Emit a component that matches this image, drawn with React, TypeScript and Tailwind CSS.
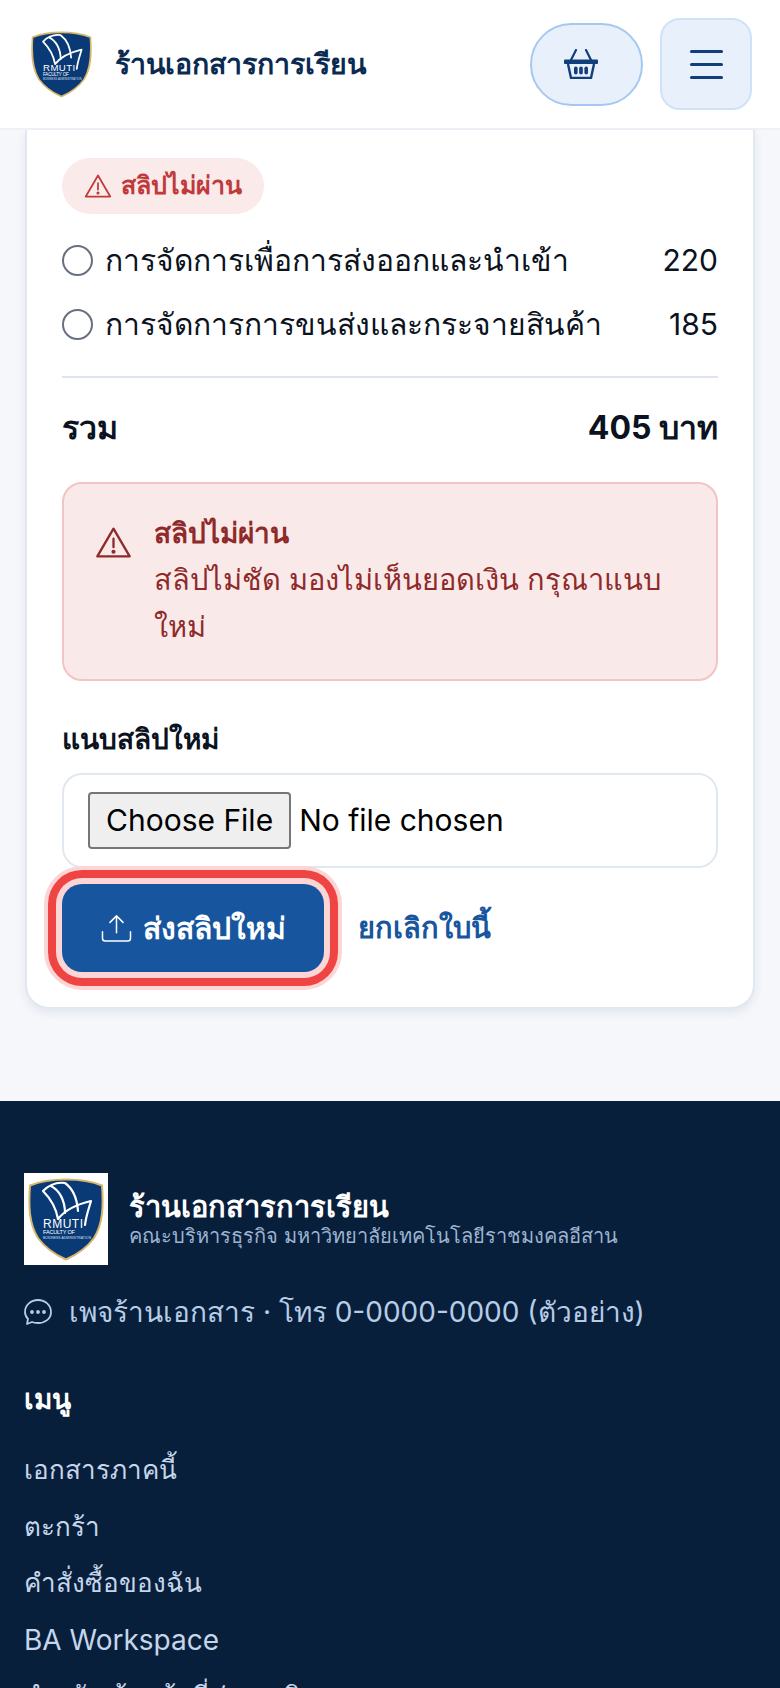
const FONT = "font-['Inter','Noto_Sans','DejaVu_Sans',sans-serif]";

function Shield() {
  return (
    <svg viewBox="0 0 76 83" className="w-full h-full">
      <path d="M38 1.5 C50 1.5 63 3 74 7.5 C75.5 28 75 46 66 60 C58 71 48 77 38 81.5 C28 77 18 71 10 60 C1 46 0.5 28 2 7.5 C13 3 26 1.5 38 1.5 Z" fill="#0a3a75" stroke="#d8b76c" strokeWidth="2" />
      <path d="M15 13 C22 6 30 4 37 5 C44 10 49 20 50 33 M23 8 C31 12 37 22 37 35 M15 13 C22 20 28 30 30 41 C37 32 50 26 63 23 C61 30 58 38 57 47" fill="none" stroke="#ffffff" strokeWidth="2.2" strokeLinecap="round" strokeLinejoin="round" />
      <text x="15" y="50" fill="#ffffff" fontSize="12" textLength="40" fontFamily="Liberation Sans, sans-serif">RMUTI</text>
      <text x="15" y="56" fill="#ffffff" fontSize="5.6" textLength="32" fontFamily="Liberation Sans, sans-serif">FACULTY OF</text>
      <text x="15" y="60.5" fill="#dfe8f5" fontSize="3.2" textLength="48" fontFamily="Liberation Sans, sans-serif">BUSINESS ADMINISTRATION</text>
    </svg>
  );
}

function Warning({ className }: { className: string }) {
  return (
    <svg viewBox="0 0 24 24" fill="none" stroke="currentColor" strokeWidth="1.5" strokeLinejoin="round" strokeLinecap="round" className={className}>
      <path d="M12 3 L22.5 21 H1.5 Z" />
      <path d="M12 9.5 V15" />
      <circle cx="12" cy="18" r="0.6" fill="currentColor" />
    </svg>
  );
}

function Basket() {
  return (
    <svg viewBox="0 0 34 30" className="w-[34px] h-[30px] text-[#123f7c]">
      <path d="M6 13 L12 1 M28 13 L22 1" stroke="currentColor" strokeWidth="2.2" strokeLinecap="round" />
      <rect x="0" y="10.5" width="34" height="4.5" rx="1" fill="currentColor" />
      <path d="M4 15 L7 29 H27 L30 15" fill="none" stroke="currentColor" strokeWidth="2.4" strokeLinejoin="round" />
      <rect x="10" y="17.5" width="3.6" height="8" rx="1.8" fill="currentColor" />
      <rect x="15.2" y="17.5" width="3.6" height="8" rx="1.8" fill="currentColor" />
      <rect x="20.4" y="17.5" width="3.6" height="8" rx="1.8" fill="currentColor" />
    </svg>
  );
}

const items = [
  { name: 'การจัดการเพื่อการส่งออกและนำเข้า', price: '220' },
  { name: 'การจัดการการขนส่งและกระจายสินค้า', price: '185' },
];

export default function App() {
  return (
    <div className={`h-[1688px] overflow-hidden bg-[#f5f7fb] ${FONT}`}>
      <header className="flex items-center justify-between h-[130px] pl-[31px] pr-[28px] bg-white border-b-2 border-[#eef2f7]">
        <div className="flex items-center gap-[23px]">
          <div className="w-[61px] h-[69px]">
            <Shield />
          </div>
          <span className="text-[28.5px] font-semibold text-[#0b2a52]">ร้านเอกสารการเรียน</span>
        </div>
        <div className="flex items-center gap-[17px]">
          <button className="flex items-center justify-center w-[113px] h-[83px] pr-[12px] rounded-full bg-[#e8f0fb] border-2 border-[#a6c8f0]">
            <Basket />
          </button>
          <button className="flex flex-col items-center justify-center gap-[10px] w-[92px] h-[92px] rounded-[20px] bg-[#e8f0fb] border-2 border-[#d0e2f8]">
            <span className="block w-[33px] h-[3px] rounded-full bg-[#123f7c]" />
            <span className="block w-[33px] h-[3px] rounded-full bg-[#123f7c]" />
            <span className="block w-[33px] h-[3px] rounded-full bg-[#123f7c]" />
          </button>
        </div>
      </header>

      <main className="px-[25px]">
        <div className="px-[35px] pt-[28px] pb-[35px] bg-white border-2 border-t-0 border-[#e2e8f0] rounded-b-[24px] shadow-[0_4px_10px_rgba(15,40,80,0.08)]">
          <div className="inline-flex items-center gap-[9px] h-[56px] px-[22px] rounded-full bg-[#faeaea] text-[#c0393b]">
            <Warning className="w-[28px] h-[28px]" />
            <span className="text-[25px] font-semibold">สลิปไม่ผ่าน</span>
          </div>

          <div className="mt-[14px] flex flex-col">
            {items.map((item) => (
              <div key={item.name} className="flex items-center justify-between h-[64px] text-[30px] text-[#0b1220]">
                <div className="flex items-center gap-[12px]">
                  <span className="w-[31px] h-[31px] rounded-full bg-white border-2 border-[#67707f]" />
                  <span>{item.name}</span>
                </div>
                <span>{item.price}</span>
              </div>
            ))}
          </div>

          <div className="mt-[20px] border-t-2 border-[#dfe5ef]" />

          <div className="flex items-center justify-between mt-[26px] text-[32px] font-bold text-[#0b1220]">
            <span>รวม</span>
            <span>405 บาท</span>
          </div>

          <div className="flex gap-[22px] mt-[30px] h-[199px] pt-[26px] pl-[31px] pr-[30px] rounded-[20px] bg-[#fae9e9] border-2 border-[#f2c4c4] text-[#8f2a2a]">
            <Warning className="w-[37px] h-[37px] mt-[14px] shrink-0" />
            <div>
              <div className="text-[28px] font-bold leading-[46px]">สลิปไม่ผ่าน</div>
              <div className="text-[29px] leading-[47px]">สลิปไม่ชัด มองไม่เห็นยอดเงิน กรุณาแนบใหม่</div>
            </div>
          </div>

          <label className="block mt-[37px] text-[28px] font-semibold text-[#0b1220]">แนบสลิปใหม่</label>

          <div className="flex items-center h-[95px] mt-[13px] px-[24px] rounded-[20px] bg-white border-2 border-[#e2e8f0]">
            <input
              type="file"
              className="text-[30px] text-black w-full file:mr-[8px] file:h-[57px] file:px-[16px] file:bg-[#efefef] file:border-2 file:border-[#767676] file:border-solid file:rounded-[4px] file:text-black"
            />
          </div>

          <div className="flex items-center gap-[34px] mt-[16px]">
            <button className="flex items-center justify-center gap-[11px] w-[262px] h-[88px] rounded-[20px] bg-[#17569e] text-white shadow-[0_0_0_6px_#fcd5d5,0_0_0_14px_#ef4444,0_0_0_18px_#fcd5d5]">
              <svg viewBox="0 0 32 30" fill="none" stroke="currentColor" strokeWidth="1.6" strokeLinecap="round" strokeLinejoin="round" className="w-[31px] h-[28px]">
                <path d="M16 20 V2 M9 9 L16 2 L23 9" />
                <path d="M1 19 V26 Q1 29 4 29 H28 Q31 29 31 26 V19" />
              </svg>
              <span className="text-[30px] font-semibold">ส่งสลิปใหม่</span>
            </button>
            <a className="text-[29px] font-semibold text-[#17569e]">ยกเลิกใบนี้</a>
          </div>
        </div>
      </main>

      <footer className="mt-[92px] px-[24px] pt-[72px] bg-[#081f3c]">
        <div className="flex items-center gap-[21px]">
          <div className="flex items-center justify-center w-[84px] h-[92px] bg-white">
            <div className="w-[76px] h-[83px]">
              <Shield />
            </div>
          </div>
          <div className="flex flex-col">
            <span className="text-[29px] leading-[34px] font-semibold text-white">ร้านเอกสารการเรียน</span>
            <span className="text-[20px] leading-[24px] text-[#9db4d0]">คณะบริหารธุรกิจ มหาวิทยาลัยเทคโนโลยีราชมงคลอีสาน</span>
          </div>
        </div>

        <div className="flex items-center gap-[17px] mt-[26px] text-[28px] text-[#b7cde6]">
          <svg viewBox="0 0 28 28" fill="none" stroke="currentColor" strokeWidth="1.8" className="w-[28px] h-[28px]">
            <path d="M14 2 C21 2 27 7 27 14 C27 21 21 25 14 25 C12 25 10 25 8 24 L3 26 L4 21 C2 19 1 17 1 14 C1 7 7 2 14 2 Z" strokeLinejoin="round" />
            <circle cx="8" cy="14" r="1" fill="currentColor" />
            <circle cx="14" cy="14" r="1" fill="currentColor" />
            <circle cx="20" cy="14" r="1" fill="currentColor" />
          </svg>
          <span>เพจร้านเอกสาร · โทร 0-0000-0000 (ตัวอย่าง)</span>
        </div>

        <div className="mt-[45px] text-[28px] font-semibold text-white">เมนู</div>
        <div className="flex flex-col mt-[22px] text-[26px] text-[#c5d6ea]">
          <a className="block h-[56.5px] leading-[56px]">เอกสารภาคนี้</a>
          <a className="block h-[56.5px] leading-[56px]">ตะกร้า</a>
          <a className="block h-[56.5px] leading-[56px]">คำสั่งซื้อของฉัน</a>
          <a className="block h-[56.5px] leading-[56px] text-[28px]">BA Workspace</a>
          <a className="block h-[56.5px] leading-[56px]">สำหรับเจ้าหน้าที่ / แอดมิน</a>
        </div>
      </footer>
    </div>
  );
}
